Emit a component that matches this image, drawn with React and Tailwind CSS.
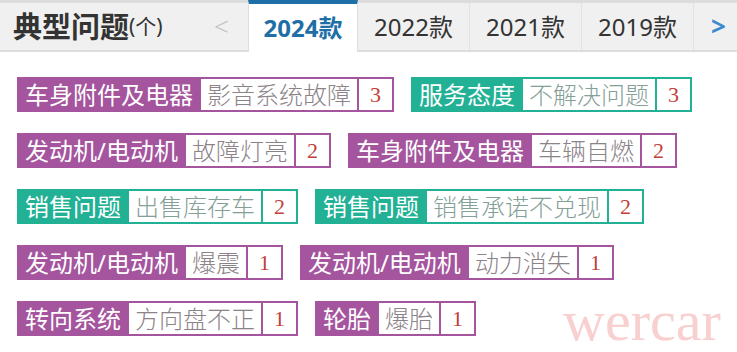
import React from "react";

const PURPLE = "purple";
const TEAL = "teal";

const issues = [
  { cat: "车身附件及电器", desc: "影音系统故障", n: 3, c: PURPLE },
  { cat: "服务态度", desc: "不解决问题", n: 3, c: TEAL },
  { cat: "发动机/电动机", desc: "故障灯亮", n: 2, c: PURPLE },
  { cat: "车身附件及电器", desc: "车辆自燃", n: 2, c: PURPLE },
  { cat: "销售问题", desc: "出售库存车", n: 2, c: TEAL },
  { cat: "销售问题", desc: "销售承诺不兑现", n: 2, c: TEAL },
  { cat: "发动机/电动机", desc: "爆震", n: 1, c: PURPLE },
  { cat: "发动机/电动机", desc: "动力消失", n: 1, c: PURPLE },
  { cat: "转向系统", desc: "方向盘不正", n: 1, c: PURPLE },
  { cat: "轮胎", desc: "爆胎", n: 1, c: PURPLE },
];

const tabs = ["2024款", "2022款", "2021款", "2019款"];

function Tag({ cat, desc, n, c }) {
  const purple = c === PURPLE;
  return (
    <div className="flex h-[35px] leading-[31px]">
      <span
        className={
          "px-[8px] pt-[2px] text-white " +
          (purple ? "bg-[#a4559e]" : "bg-[#22b195]")
        }
      >
        {cat}
      </span>
      <span
        className={
          "border-y-2 border-r-2 bg-white px-[6px] font-light " +
          (purple
            ? "border-[#a4559e] text-[#8c8389]"
            : "border-[#22b195] text-[#84a097]")
        }
      >
        {desc}
      </span>
      <span
        className={
          "w-[35px] border-y-2 border-r-2 bg-white text-center font-['Liberation_Serif',serif] text-[22px] text-[#c2413b] " +
          (purple ? "border-[#a4559e]" : "border-[#22b195]")
        }
      >
        {n}
      </span>
    </div>
  );
}

export default function App() {
  return (
    <div className="relative h-[352px] w-[737px] overflow-hidden bg-white font-['Noto_Sans','Noto_Sans_CJK_SC',sans-serif]">
      {/* Header */}
      <div className="flex h-[52px] border-t-[3px] border-b-2 border-t-[#dcdcdc] border-b-[#dddddd] bg-[#f0f0f0]">
        <div className="flex w-[174px] items-center pl-[13px] text-[#333]">
          <span className="text-[29px] font-bold leading-none">典型问题</span>
          <span className="text-[21px] leading-none">(个)</span>
        </div>
        <div className="flex w-[74px] items-center pl-[40px] text-[26px] font-light text-[#c2c2c2]">
          &lt;
        </div>
        <div className="flex">
          {tabs.map((t, i) =>
            i === 0 ? (
              <div
                key={t}
                className="relative -top-[3px] -mb-[5px] flex w-[110px] items-center justify-center border-x border-t-4 border-x-[#dedede] border-t-[#1f6fa7] bg-white text-[24px] font-bold text-[#1f6fa7]"
              >
                {t}
              </div>
            ) : (
              <div
                key={t}
                className="flex w-[112px] items-center justify-center border-r border-[#e2e2e2] text-[24px] text-[#333]"
              >
                {t}
              </div>
            )
          )}
        </div>
        <div className="flex flex-1 items-center pl-[17px] text-[26px] font-bold text-[#3b89cf]">
          &gt;
        </div>
      </div>

      {/* Tags */}
      <div className="flex flex-wrap gap-x-[17px] gap-y-[21px] pl-[17px] pr-[10px] pt-[25px] text-[24px]">
        {issues.map((it, i) => (
          <Tag key={i} {...it} />
        ))}
      </div>

      <div className="absolute left-[563px] top-[292px] font-['Liberation_Serif',serif] text-[58px] leading-none text-[#f8d0d0]">
        wercar
      </div>
    </div>
  );
}
